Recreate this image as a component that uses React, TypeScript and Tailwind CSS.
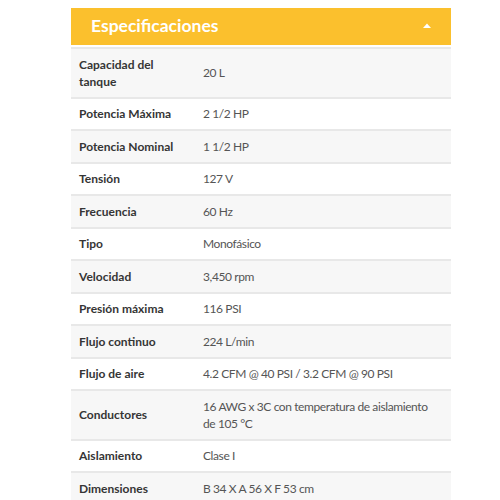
import type { FC } from 'react';

const specs: [string, string][] = [
  ['Capacidad del tanque', '20 L'],
  ['Potencia Máxima', '2 1/2 HP'],
  ['Potencia Nominal', '1 1/2 HP'],
  ['Tensión', '127 V'],
  ['Frecuencia', '60 Hz'],
  ['Tipo', 'Monofásico'],
  ['Velocidad', '3,450 rpm'],
  ['Presión máxima', '116 PSI'],
  ['Flujo continuo', '224 L/min'],
  ['Flujo de aire', '4.2 CFM @ 40 PSI / 3.2 CFM @ 90 PSI'],
  ['Conductores', '16 AWG x 3C con temperatura de aislamiento de 105 °C'],
  ['Aislamiento', 'Clase I'],
  ['Dimensiones', 'B 34 X A 56 X F 53 cm'],
];

const App: FC = () => {
  return (
    <div className="min-h-[500px] bg-white pt-2 font-['Lato',_'Liberation_Sans',_sans-serif]">
      <section className="ml-[71px] w-[380px]">
        {/* yellow accordion header */}
        <div className="flex h-[37px] items-center justify-between bg-[#fbc02d] pl-5 pr-[20px]">
          <h2 className="text-[17.5px] font-bold text-white">Especificaciones</h2>
          <svg width="8" height="5" viewBox="0 0 8 5" className="mb-[2px]">
            <path d="M0 5 L4 0.5 L8 5 Z" fill="#fff" />
          </svg>
        </div>

        <div className="mt-[2px] border-t-2 border-[#e8e8e8]">
          {specs.map(([label, value], i) => (
            <div
              key={label}
              className={`flex items-center border-b-2 border-[#e8e8e8] py-[6.75px] text-[12px] leading-[17px] ${
                i % 2 === 0 ? 'bg-[#f7f7f7]' : 'bg-white'
              }`}
            >
              <div className="w-[132px] shrink-0 pl-2 pr-3 font-bold text-[#353535]">{label}</div>
              <div className="pr-3 tracking-[-0.4px] text-[#555]">{value}</div>
            </div>
          ))}
        </div>
      </section>
    </div>
  );
};

export default App;
